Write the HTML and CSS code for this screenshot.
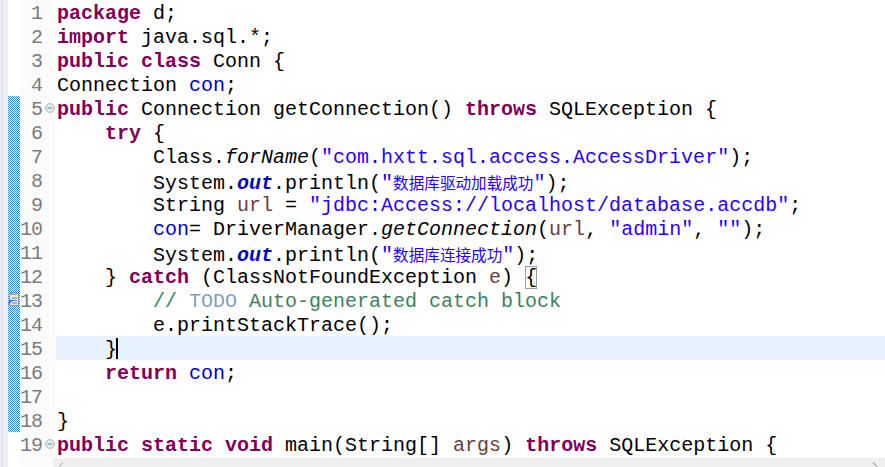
FILE: index.html
```html
<!DOCTYPE html>
<html>
<head>
<meta charset="utf-8">
<link rel="stylesheet" href="styles.css">
</head>
<body>
<svg class="defs" width="0" height="0">
  <defs>
    <pattern id="chk" x="0" y="0" width="2" height="2" patternUnits="userSpaceOnUse">
      <rect x="0" y="0" width="2" height="2" fill="#ffffff"/>
      <rect x="0" y="0" width="1" height="1" fill="#2f86dc"/>
      <rect x="1" y="1" width="1" height="1" fill="#2f86dc"/>
    </pattern>
  </defs>
</svg>
<div class="editor">
  <div class="row"><span class="chg"></span><span class="num">1</span><span class="fold"></span><span class="src"><span class="k">package</span> d;</span></div>
  <div class="row"><span class="chg"></span><span class="num">2</span><span class="fold"></span><span class="src"><span class="k">import</span> java.sql.*;</span></div>
  <div class="row"><span class="chg"></span><span class="num">3</span><span class="fold"></span><span class="src"><span class="k">public</span> <span class="k">class</span> Conn {</span></div>
  <div class="row"><span class="chg"></span><span class="num">4</span><span class="fold"></span><span class="src">Connection <span class="f">con</span>;</span></div>
  <div class="row"><span class="chg"><svg class="bar" width="12" height="24"><rect width="12" height="24" fill="url(#chk)"/></svg></span><span class="num">5</span><span class="fold"><svg width="10" height="10" viewBox="0 0 10 10"><circle cx="5" cy="5" r="4.4" fill="#e4e9ef" stroke="#a9b5c3" stroke-width="1"/><path d="M2.6 5h4.8" stroke="#72859a" stroke-width="1"/></svg></span><span class="src"><span class="k">public</span> Connection getConnection() <span class="k">throws</span> SQLException {</span></div>
  <div class="row"><span class="chg"><svg class="bar" width="12" height="24"><rect width="12" height="24" fill="url(#chk)"/></svg></span><span class="num">6</span><span class="fold"></span><span class="src">    <span class="k">try</span> {</span></div>
  <div class="row"><span class="chg"><svg class="bar" width="12" height="24"><rect width="12" height="24" fill="url(#chk)"/></svg></span><span class="num">7</span><span class="fold"></span><span class="src">        Class.<span class="sm">forName</span>(<span class="s">"com.hxtt.sql.access.AccessDriver"</span>);</span></div>
  <div class="row"><span class="chg"><svg class="bar" width="12" height="24"><rect width="12" height="24" fill="url(#chk)"/></svg></span><span class="num">8</span><span class="fold"></span><span class="src">        System.<span class="sf">out</span>.println(<span class="s">"<span class="cjk">数据库驱动加载成功</span>"</span>);</span></div>
  <div class="row"><span class="chg"><svg class="bar" width="12" height="24"><rect width="12" height="24" fill="url(#chk)"/></svg></span><span class="num">9</span><span class="fold"></span><span class="src">        String <span class="v">url</span> = <span class="s">"jdbc:Access://localhost/database.accdb"</span>;</span></div>
  <div class="row"><span class="chg"><svg class="bar" width="12" height="24"><rect width="12" height="24" fill="url(#chk)"/></svg></span><span class="num">10</span><span class="fold"></span><span class="src">        <span class="f">con</span>= DriverManager.<span class="sm">getConnection</span>(<span class="v">url</span>, <span class="s">"admin"</span>, <span class="s">""</span>);</span></div>
  <div class="row"><span class="chg"><svg class="bar" width="12" height="24"><rect width="12" height="24" fill="url(#chk)"/></svg></span><span class="num">11</span><span class="fold"></span><span class="src">        System.<span class="sf">out</span>.println(<span class="s">"<span class="cjk">数据库连接成功</span>"</span>);</span></div>
  <div class="row"><span class="chg"><svg class="bar" width="12" height="24"><rect width="12" height="24" fill="url(#chk)"/></svg></span><span class="num">12</span><span class="fold"></span><span class="src">    } <span class="k">catch</span> (ClassNotFoundException <span class="v">e</span>) <span class="bm">{</span></span></div>
  <div class="row"><span class="chg"><svg class="bar" width="12" height="24"><rect width="12" height="24" fill="url(#chk)"/><g transform="translate(0,4)"><rect x="1.5" y="1.5" width="9" height="12" fill="#ece6d2" stroke="#8f8f8f"/><rect x="3.5" y="0.5" width="5" height="2" fill="#b9b9b9" stroke="#7f7f7f" stroke-width="0.6"/><path d="M4 6h5M4 8.5h5M4 11h5" stroke="#5a7fb8" stroke-width="1"/><path d="M0.5 11.5l3.5-3.5" stroke="#1d5fd1" stroke-width="1.6"/></g></svg></span><span class="num">13</span><span class="fold"></span><span class="src">        <span class="c">// <span class="t">TODO</span> Auto-generated catch block</span></span></div>
  <div class="row"><span class="chg"><svg class="bar" width="12" height="24"><rect width="12" height="24" fill="url(#chk)"/></svg></span><span class="num">14</span><span class="fold"></span><span class="src">        e.printStackTrace();</span></div>
  <div class="row"><span class="chg"><svg class="bar" width="12" height="24"><rect width="12" height="24" fill="url(#chk)"/></svg></span><span class="num">15</span><span class="fold"></span><span class="src cur">    }<span class="caret"></span></span></div>
  <div class="row"><span class="chg"><svg class="bar" width="12" height="24"><rect width="12" height="24" fill="url(#chk)"/></svg></span><span class="num">16</span><span class="fold"></span><span class="src">    <span class="k">return</span> <span class="f">con</span>;</span></div>
  <div class="row"><span class="chg"><svg class="bar" width="12" height="24"><rect width="12" height="24" fill="url(#chk)"/></svg></span><span class="num">17</span><span class="fold"></span><span class="src"></span></div>
  <div class="row"><span class="chg"><svg class="bar" width="12" height="24"><rect width="12" height="24" fill="url(#chk)"/></svg></span><span class="num">18</span><span class="fold"></span><span class="src">}</span></div>
  <div class="row"><span class="chg"></span><span class="num">19</span><span class="fold"><svg width="10" height="10" viewBox="0 0 10 10"><circle cx="5" cy="5" r="4.4" fill="#e4e9ef" stroke="#a9b5c3" stroke-width="1"/><path d="M2.6 5h4.8" stroke="#72859a" stroke-width="1"/></svg></span><span class="src"><span class="k">public</span> <span class="k">static</span> <span class="k">void</span> main(String[] <span class="v">args</span>) <span class="k">throws</span> SQLException {</span></div>
  <div class="hscroll">
    <svg class="arr" width="8" height="9" viewBox="0 0 8 9"><path d="M2 8.5L6 4.5" stroke="#c4c4c4" stroke-width="1.3"/></svg>
    <svg class="arr" width="8" height="9" viewBox="0 0 8 9"><path d="M2 4.5L6 8.5" stroke="#b4b4b4" stroke-width="1.6"/></svg>
  </div>
</div>
</body>
</html>
```
FILE: styles.css
```css
html, body {
  margin: 0;
  padding: 0;
  background: #ffffff;
}
body {
  width: 885px;
  height: 467px;
  overflow: hidden;
}
.defs {
  display: block;
  width: 0;
  height: 0;
  overflow: hidden;
}
.editor {
  width: 885px;
  height: 467px;
  display: flex;
  flex-direction: column;
  background:
    linear-gradient(to right,
      #eceef7 0, #eceef7 2px,
      #d9dcea 2px, #d9dcea 3px,
      #eef0f8 3px, #eef0f8 8px,
      #ffffff 8px, #ffffff 20px,
      #fbfbfb 20px, #fbfbfb 55px,
      #ffffff 55px);
  font-family: "Liberation Mono", monospace;
  font-size: 20px;
  color: #000;
}
.row {
  display: flex;
  height: 24px;
  flex: none;
  margin-left: 8px;
}
.chg {
  width: 12px;
  flex: none;
}
.bar {
  display: block;
}
.num {
  width: 22px;
  flex: none;
  text-align: right;
  color: #7b7b7b;
  font-size: 20px;
  letter-spacing: -1px;
  line-height: 24px;
  box-sizing: border-box;
  padding-top: 2px;
  white-space: nowrap;
}
.fold {
  width: 14px;
  flex: none;
  display: flex;
  align-items: center;
  justify-content: center;
  padding-bottom: 1px;
  box-sizing: border-box;
}
.fold svg {
  display: block;
  margin-left: 1px;
}
.src {
  flex: 1;
  white-space: pre;
  line-height: 24px;
  box-sizing: border-box;
  padding-top: 2px;
  padding-left: 1px;
}
.src.cur {
  background: #e8f2fe;
}
.k { color: #7f0055; font-weight: bold; }
.s { color: #2a00ff; }
.f { color: #0000c0; }
.sf { color: #0000c0; font-weight: bold; font-style: italic; }
.sm { font-style: italic; }
.v { color: #6a3e3e; }
.c { color: #3f7f5f; }
.t { color: #7f9fbf; }
.cjk {
  font-family: "Noto Sans CJK SC", sans-serif;
  font-size: 15.6px;
}
.bm {
  box-shadow: inset 0 0 0 1px #9c9c9c;
}
.caret {
  display: inline-block;
  width: 2px;
  height: 21px;
  margin-left: -1px;
  background: #000;
  vertical-align: -4px;
}
.hscroll {
  margin-top: 2px;
  margin-left: 53px;
  height: 9px;
  background: #efefef;
  display: flex;
  justify-content: space-between;
  align-items: flex-start;
  padding: 0 6px 0 4px;
}
.arr {
  display: block;
}
```
